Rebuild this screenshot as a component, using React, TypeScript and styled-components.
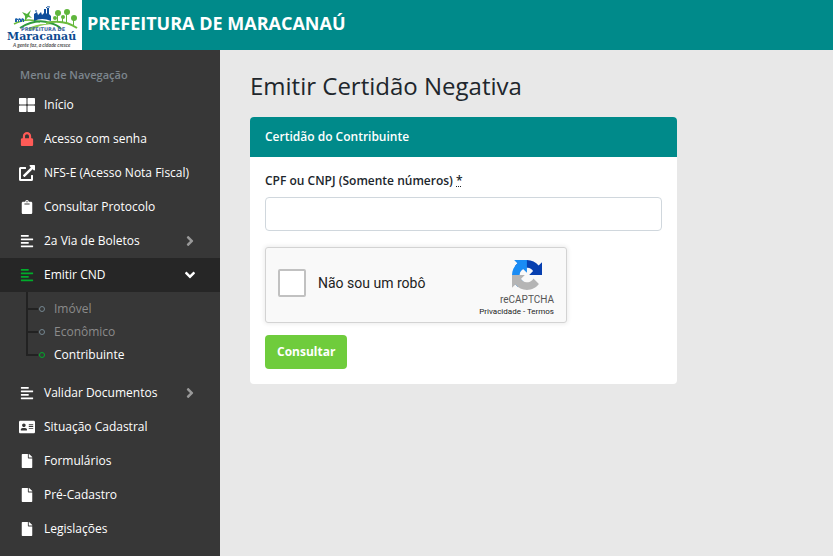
import React from "react";
import styled, { createGlobalStyle, css } from "styled-components";
import {
  FaAddressCard,
  FaAlignLeft,
  FaAngleDown,
  FaAngleRight,
  FaClipboard,
  FaExternalLinkAlt,
  FaFile,
  FaLock,
  FaThLarge,
} from "react-icons/fa";

const GlobalStyle = createGlobalStyle`
  *, *::before, *::after { box-sizing: border-box; }
  body {
    margin: 0;
    background: #e8e8e8;
    color: #20262c;
    font: 400 12px/18px "Open Sans", "Liberation Sans", sans-serif;
  }
  button, input { font: inherit; }
  ul { margin: 0; padding: 0; list-style: none; }
`;

const Page = styled.div`
  display: flex;
  flex-direction: column;
  min-height: 100vh;
`;

const Header = styled.header`
  display: flex;
  align-items: center;
  height: 50px;
  background: #008a8a;
`;

const HomeLink = styled.a`
  display: flex;
  align-items: center;
  gap: 5px;
  color: #fff;
  font-size: 18px;
  line-height: 24px;
  font-weight: 700;
  text-decoration: none;
  white-space: nowrap;
`;

const HomeText = styled.span`
  padding-bottom: 4px;
`;

const Body = styled.div`
  display: flex;
  flex: 1;
`;

const Sidebar = styled.nav`
  flex: none;
  width: 220px;
  padding-top: 16px;
  background: #373737;
`;

const MenuTitle = styled.div`
  padding: 0 20px;
  margin-bottom: 4px;
  color: #7c858c;
  font-size: 11px;
  font-weight: 600;
`;

const MenuLink = styled.a<{ $active?: boolean }>`
  display: flex;
  align-items: center;
  height: 34px;
  padding: 0 24px 0 20px;
  background: ${(p) => (p.$active ? "#262626" : "transparent")};
  color: #fff;
  font-weight: 500;
  text-decoration: none;
  white-space: nowrap;
`;

const MenuIcon = styled.span<{ $color: string }>`
  display: flex;
  justify-content: center;
  width: 14px;
  margin-right: 10px;
  color: ${(p) => p.$color};
  svg { flex: none; }
`;

const MenuText = styled.span`
  flex: 1;
`;

const Caret = styled.span<{ $active?: boolean }>`
  display: flex;
  justify-content: center;
  width: 12px;
  color: ${(p) => (p.$active ? "#fff" : "#999")};
  svg { flex: none; }
`;

const SubMenu = styled.ul`
  padding: 5px 0 10px 26px;
`;

const branch = css`
  content: "";
  position: absolute;
  background: #222;
`;

const SubItem = styled.li`
  position: relative;
  &::before { ${branch} left: 0; top: 0; width: 2px; height: 100%; }
  &::after { ${branch} left: 0; top: 11px; width: 12px; height: 2px; }
  &:first-child::before { top: -5px; height: 28px; }
  &:last-child::before { height: 13px; }
`;

const SubLink = styled.a<{ $active?: boolean }>`
  display: flex;
  align-items: center;
  gap: 9px;
  height: 23px;
  padding-left: 13px;
  color: ${(p) => (p.$active ? "#fff" : "#8b8b8b")};
  font-weight: 500;
  text-decoration: none;
  &::before {
    content: "";
    width: 6px;
    height: 6px;
    border: 1px solid ${(p) => (p.$active ? "#00ac2b" : "#73858f")};
    border-radius: 50%;
  }
`;

const Main = styled.main`
  flex: 1;
  min-width: 0;
  padding: 20px 30px;
`;

const Title = styled.h1`
  margin: 0 0 15px;
  font-size: 24px;
  line-height: 32px;
  font-weight: 400;
`;

const Panel = styled.section`
  max-width: 427px;
  border-radius: 4px;
  background: #fff;
  overflow: hidden;
`;

const PanelTitle = styled.h2`
  margin: 0;
  padding: 11px 15px;
  background: #008a8a;
  color: #fff;
  font-size: 12px;
  line-height: 18px;
  font-weight: 600;
`;

const Form = styled.form`
  display: flex;
  flex-direction: column;
  align-items: flex-start;
  padding: 15px;
`;

const Label = styled.label`
  margin-bottom: 7px;
  font-weight: 600;
`;

const Required = styled.abbr`
  text-decoration: underline dotted;
`;

const TextBox = styled.input`
  width: 100%;
  height: 34px;
  margin-bottom: 16px;
  padding: 6px 12px;
  border: 1px solid #d0d7dd;
  border-radius: 4px;
  background: #fff;
`;

const Captcha = styled.div`
  display: flex;
  align-items: center;
  justify-content: space-between;
  width: 302px;
  max-width: 100%;
  height: 76px;
  margin-bottom: 12px;
  padding: 0 12px;
  border: 1px solid #d3d3d3;
  border-radius: 3px;
  background: #f9f9f9;
  box-shadow: 0 0 4px 1px rgba(0, 0, 0, 0.08);
  color: #222;
  font-family: Roboto, "Liberation Sans", sans-serif;
`;

const CheckLabel = styled.label`
  display: flex;
  align-items: center;
  gap: 12px;
  padding-bottom: 4px;
  font-size: 14px;
`;

const CheckBox = styled.input`
  appearance: none;
  width: 28px;
  height: 28px;
  margin: 0;
  border: 2px solid #c1c1c1;
  border-radius: 2px;
  background: #fff;
`;

const Brand = styled.div`
  display: flex;
  flex-direction: column;
  align-items: flex-end;
  padding-top: 8px;
`;

const BrandLogo = styled.svg`
  width: 30px;
  height: 30px;
  margin-right: 12px;
`;

const BrandName = styled.span`
  margin-top: 4px;
  color: #555;
  font-size: 10px;
  line-height: 12px;
`;

const Terms = styled.span`
  font-size: 8px;
  line-height: 12px;
  a { color: #222; text-decoration: none; }
`;

const Submit = styled.button`
  height: 34px;
  padding: 0 12px;
  border: 0;
  border-radius: 4px;
  background: #6fcc3c;
  color: #fff;
  font-weight: 700;
`;

const Crest = () => (
  <svg width="82" height="50" viewBox="0 0 82 50" aria-hidden="true">
    <rect width="82" height="50" fill="#fff" />
    <path d="M14 24Q27 17 40 22" fill="none" stroke="#6cbb3c" strokeWidth="1.5" />
    <path d="M20 28Q36 18 50 23Q58 25 61 29" fill="none" stroke="#2f9c3c" strokeWidth="2" />
    <path d="M46 23Q64 19 77 28" fill="none" stroke="#6cbb3c" strokeWidth="2" />
    <path d="M27 29Q40 22 52 25Q40 24 33 30Z" fill="#8bcb50" />
    <path d="M15 22v-3l1-1 2 1v1l1-2 2 1v1l1-2 2 1v3h-1v-2h-1v2h-2v-2h-1v2h-1v-2h-1v2Z" fill="#1c62ac" />
    <path d="M34 21v-7l3-2 1 3 3-3 1 3 2-2V9h2v5l1-1V8h2v6l2 2v5Q42 17 34 21Z" fill="#104f9c" />
    <path d="M46 8q1-2 4-1M36 12v-2" fill="none" stroke="#104f9c" />
    <path d="M22 12l5 2 4-4-2 5 3 3-4-1-3 4 0-5Z" fill="#4fb13b" />
    <g fill="#5fb63c">
      <circle cx="58" cy="13" r="3" />
      <circle cx="67" cy="12" r="3" />
      <circle cx="63" cy="17" r="2" />
      <circle cx="74" cy="18" r="3" />
      <circle cx="55" cy="18" r="2" />
      <path d="M57 14h1v8h-1zM66 14h1v8h-1zM62 18h1v4h-1zM73 19h1v6h-1z" />
    </g>
    <text x="21" y="31" fontSize="5" fontFamily="DejaVu Sans, sans-serif" fill="#3c62a0">PREFEITURA DE</text>
    <text x="7" y="40" fontSize="11" fontWeight="700" fontFamily="DejaVu Serif, serif" fill="#0d4a90">Maracanaú</text>
    <text x="13" y="47" fontSize="5" fontStyle="italic" fontFamily="Lato, sans-serif" fill="#555">A gente faz, a cidade cresce</text>
  </svg>
);

type Item = {
  text: string;
  icon: React.ReactNode;
  color?: string;
  expands?: boolean;
  children?: string[];
};

const items: Item[] = [
  { text: "Início", icon: <FaThLarge size={16} /> },
  { text: "Acesso com senha", icon: <FaLock size={14} />, color: "#ff5b57" },
  { text: "NFS-E (Acesso Nota Fiscal)", icon: <FaExternalLinkAlt size={16} /> },
  { text: "Consultar Protocolo", icon: <FaClipboard size={14} /> },
  { text: "2a Via de Boletos", icon: <FaAlignLeft size={14} />, expands: true },
  {
    text: "Emitir CND",
    icon: <FaAlignLeft size={14} />,
    color: "#00ac2b",
    expands: true,
    children: ["Imóvel", "Econômico", "Contribuinte"],
  },
  { text: "Validar Documentos", icon: <FaAlignLeft size={14} />, expands: true },
  { text: "Situação Cadastral", icon: <FaAddressCard size={16} /> },
  { text: "Formulários", icon: <FaFile size={14} /> },
  { text: "Pré-Cadastro", icon: <FaFile size={14} /> },
  { text: "Legislações", icon: <FaFile size={14} /> },
];

export default function App() {
  return (
    <Page>
      <GlobalStyle />
      <Header>
        <HomeLink href="#">
          <Crest />
          <HomeText>PREFEITURA DE MARACANAÚ</HomeText>
        </HomeLink>
      </Header>
      <Body>
        <Sidebar>
          <MenuTitle>Menu de Navegação</MenuTitle>
          <ul>
            {items.map((item) => {
              const open = Boolean(item.children);
              return (
                <li key={item.text}>
                  <MenuLink href="#" $active={open}>
                    <MenuIcon $color={item.color ?? "#fff"}>{item.icon}</MenuIcon>
                    <MenuText>{item.text}</MenuText>
                    {item.expands && (
                      <Caret $active={open}>
                        {open ? <FaAngleDown size={16} /> : <FaAngleRight size={16} />}
                      </Caret>
                    )}
                  </MenuLink>
                  {item.children && (
                    <SubMenu>
                      {item.children.map((child) => (
                        <SubItem key={child}>
                          <SubLink href="#" $active={child === "Contribuinte"}>
                            {child}
                          </SubLink>
                        </SubItem>
                      ))}
                    </SubMenu>
                  )}
                </li>
              );
            })}
          </ul>
        </Sidebar>
        <Main>
          <Title>Emitir Certidão Negativa</Title>
          <Panel>
            <PanelTitle>Certidão do Contribuinte</PanelTitle>
            <Form>
              <Label htmlFor="document">
                CPF ou CNPJ (Somente números) <Required title="obrigatório">*</Required>
              </Label>
              <TextBox id="document" type="text" />
              <Captcha>
                <CheckLabel>
                  <CheckBox type="checkbox" />
                  Não sou um robô
                </CheckLabel>
                <Brand>
                  <BrandLogo viewBox="0 0 64 64" aria-hidden="true">
                    <path fill="#0840b0" d="M64 31.955a33.38 33.38 0 0 0-.033-1.374V4.687l-7.16 7.16C50.948 4.674 42.033.093 32.05.093c-10.4 0-19.622 4.96-25.458 12.64l11.736 11.86a15.55 15.55 0 0 1 4.754-5.334c2.05-1.6 4.952-2.906 8.968-2.906.485 0 .86.057 1.135.163 4.976.393 9.288 3.14 11.828 7.124l-8.307 8.307 27.293-.04" />
                    <path fill="#1a8cf4" d="M31.862.094a33.37 33.37 0 0 0-1.374.033H4.594l7.16 7.16C4.58 13.147 0 22.06 0 32.046c0 10.4 4.96 19.622 12.64 25.458L24.5 45.768a15.55 15.55 0 0 1-5.334-4.754c-1.6-2.05-2.906-4.952-2.906-8.968 0-.485.057-.86.163-1.135.393-4.976 3.14-9.288 7.124-11.828l8.307 8.307-.04-27.293" />
                    <path fill="#b5b5b5" d="M.001 32.045a33.37 33.37 0 0 0 .033 1.374v25.894l7.16-7.16c5.86 7.173 14.774 11.754 24.76 11.754 10.4 0 19.622-4.96 25.458-12.64l-11.736-11.86a15.55 15.55 0 0 1-4.754 5.334c-2.05 1.6-4.952 2.906-8.968 2.906-.485 0-.86-.057-1.135-.163-4.976-.393-9.288-3.14-11.828-7.124l8.307-8.307c-10.522.04-22.4.066-27.295-.005" />
                  </BrandLogo>
                  <BrandName>reCAPTCHA</BrandName>
                  <Terms>
                    <a href="#">Privacidade</a> - <a href="#">Termos</a>
                  </Terms>
                </Brand>
              </Captcha>
              <Submit type="button">Consultar</Submit>
            </Form>
          </Panel>
        </Main>
      </Body>
    </Page>
  );
}
